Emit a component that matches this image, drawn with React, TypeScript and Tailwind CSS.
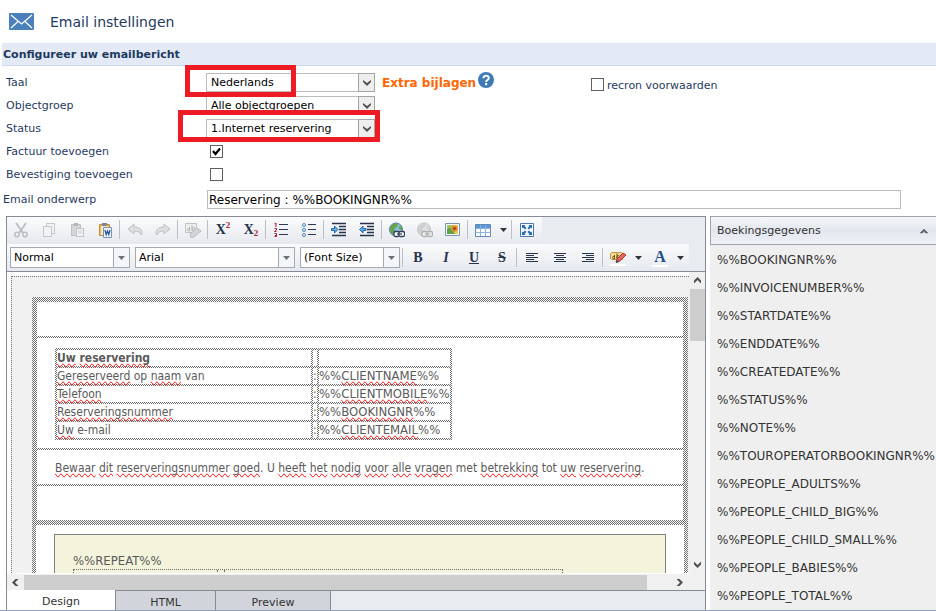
import type { ReactNode } from 'react';

const FIELDS = [
  'BOOKINGNR',
  'INVOICENUMBER',
  'STARTDATE',
  'ENDDATE',
  'CREATEDATE',
  'STATUS',
  'NOTE',
  'TOUROPERATORBOOKINGNR',
  'PEOPLE_ADULTS',
  'PEOPLE_CHILD_BIG',
  'PEOPLE_CHILD_SMALL',
  'PEOPLE_BABIES',
  'PEOPLE_TOTAL',
];

// one-pixel checkerboard used for the table guides in the editor
const CHECKER = 'bg-[repeating-conic-gradient(#6e6e6e_0_25%,#ffffff_0_50%)] bg-[length:2px_2px]';

export default function App() {
  return (
    <div className="overflow-hidden bg-white font-['DejaVu_Sans',Verdana,sans-serif] text-[11px] leading-4 text-[#1f3a5f]">
      <header className="flex h-[43px] items-center gap-4 pl-[9px]">
        <svg width="25" height="17" viewBox="0 0 25 17" aria-hidden="true">
          <rect width="25" height="17" rx="1" fill="#4a80bb" />
          <path d="M2 2l10.500 9L23 2M2 15l7-6.500M23 15l-7-6.500" fill="none" stroke="#fff" strokeWidth="1.200" />
        </svg>
        <h1 className="text-[14px]">Email instellingen</h1>
      </header>
      <h2 className="ml-0.5 h-[23px] border-b border-[#cddaee] bg-[#e3eaf5] pl-px text-[11px] leading-6 font-bold">
        Configureer uw emailbericht
      </h2>

      <SettingsForm />

      <div className="flex border-b border-[#8fa3bd] pl-1.5">
        <Editor />
        <FieldPanel />
      </div>
    </div>
  );
}

function SettingsForm() {
  return (
    <form className="relative pt-[5px]">
      <div className="flex">
        <div className="w-[376px] shrink-0">
          <FormRow id="taal" label="Taal">
            <Dropdown id="taal" value="Nederlands" />
          </FormRow>
          <FormRow id="objectgroep" label="Objectgroep">
            <Dropdown id="objectgroep" value="Alle objectgroepen" />
          </FormRow>
          <FormRow id="status" label="Status">
            <Dropdown id="status" value="1.Internet reservering" />
          </FormRow>
          <FormRow id="factuur" label="Factuur toevoegen">
            <Tick id="factuur" checked />
          </FormRow>
          <FormRow id="bevestiging" label="Bevestiging toevoegen">
            <Tick id="bevestiging" />
          </FormRow>
        </div>
        <div className="flex h-[18px] items-center gap-0.5 pl-1.5">
          <a href="#bijlagen" className="pt-1.5 text-[12px] font-bold text-[#ff6600]">
            Extra bijlagen
          </a>
          <button type="button" aria-label="Help" className="size-4">
            <svg width="16" height="16" viewBox="0 0 16 16">
              <circle cx="8" cy="8" r="8" fill="#3f7ab8" />
              <path d="M5.500 6.200C5.500 3 10.800 3 10.800 6c0 2-2.700 1.900-2.700 4" fill="none" stroke="#fff" strokeWidth="2" />
              <rect x="7" y="11" width="2.200" height="2.200" fill="#fff" />
            </svg>
          </button>
        </div>
        <div className="ml-auto flex h-[26px] w-[345px] items-center gap-[3px]">
          <Tick id="recron" plain />
          <label htmlFor="recron" className="pt-1">
            recron voorwaarden
          </label>
        </div>
      </div>
      <div className="flex h-[30px] items-center pr-[35px] pb-[3px] pl-[3px]">
        <label htmlFor="onderwerp" className="w-[204px] shrink-0">
          Email onderwerp
        </label>
        <input
          id="onderwerp"
          defaultValue="Reservering : %%BOOKINGNR%%"
          className="h-[19px] min-w-0 flex-1 border border-[#bcbcbc] px-px text-[12px] text-black"
        />
      </div>
      <div className="pointer-events-none absolute -top-px left-[185px] h-8 w-[111px] border-[5px] border-[#ed1c24]" />
      <div className="pointer-events-none absolute top-11 left-[178px] h-8 w-[202px] border-[5px] border-[#ed1c24]" />
    </form>
  );
}

function FormRow({ id, label, children }: { id: string; label: string; children: ReactNode }) {
  return (
    <div className="flex h-[23px] items-center pl-1.5">
      <label htmlFor={id} className="w-[200px] shrink-0">
        {label}
      </label>
      {children}
    </div>
  );
}

function Dropdown({ id, value }: { id: string; value: string }) {
  return (
    <div className="relative h-[19px] w-[169px]">
      <select id={id} className="h-[19px] w-full appearance-none border border-[#bcbcbc] bg-white pl-1 text-black">
        <option>{value}</option>
      </select>
      <span className="pointer-events-none absolute inset-y-0 right-0 flex w-[17px] items-center justify-center border border-[#a5a5a5] bg-[#eeeeee]">
        <svg width="8" height="6" viewBox="0 0 8 6">
          <path d="M0 0l4 3 4-3v2L4 6 0 2z" fill="#505050" />
        </svg>
      </span>
    </div>
  );
}

function Tick({ id, checked, plain }: { id: string; checked?: boolean; plain?: boolean }) {
  return (
    <span className={plain ? 'relative size-[13px]' : 'relative ml-1 size-[13px]'}>
      <input
        id={id}
        type="checkbox"
        defaultChecked={checked}
        className="peer block size-[13px] appearance-none border border-[#606060] bg-white"
      />
      <svg
        width="13"
        height="13"
        viewBox="0 0 13 13"
        className="pointer-events-none absolute inset-0 hidden peer-checked:block"
      >
        <path d="M3 6l2.500 3L10 3.500" fill="none" stroke="#000" strokeWidth="2.200" />
      </svg>
    </span>
  );
}

function Editor() {
  return (
    <section className="flex min-w-0 flex-1 flex-col border-x border-t border-[#858a94] bg-[#e8ebf0]">
      <Toolbar />
      <div className="flex h-[302px] bg-white">
        <Canvas />
        <div className="flex w-4 shrink-0 flex-col items-center bg-[#f0f0f0]">
          <Arrow className="my-1 rotate-180" />
          <div className="h-[52px] w-[15px] bg-[#cdcdcd]" />
          <Arrow className="mt-auto mb-[5px]" />
        </div>
      </div>
      <div className="flex h-4 items-center bg-[#f0f0f0]">
        <Arrow className="mx-1 rotate-90" />
        <div className="h-[15px] flex-1 bg-[#cdcdcd]" />
        <Arrow className="mr-[21px] ml-7 -rotate-90" />
      </div>
      <div className="flex h-5 text-center text-[#333333]" role="tablist">
        <button type="button" role="tab" aria-selected="true" className="w-[108px] bg-white pt-1">
          Design
        </button>
        <button type="button" role="tab" className="w-[100px] border-t border-l border-[#858a94] bg-[#d1d5db] pt-1">
          HTML
        </button>
        <button type="button" role="tab" className="w-[115px] border-t border-l border-[#858a94] bg-[#d1d5db] pt-1">
          Preview
        </button>
        <div className="flex-1 border-t border-l border-[#858a94]" />
      </div>
    </section>
  );
}

function Arrow({ className }: { className: string }) {
  return (
    <button type="button" aria-label="Scroll" className={`flex size-[9px] shrink-0 items-center justify-center ${className}`}>
      <svg width="9" height="9" viewBox="0 0 9 9">
        <path d="M1 1.500l3.500 3.500L8 1.500V4.500L4.500 8 1 4.500z" fill="#505050" />
      </svg>
    </button>
  );
}

/* ---------- toolbar ---------- */

function Toolbar() {
  return (
    <div className="border-b border-[#858a94]">
      <div className="flex h-[27px] w-[535px] items-center bg-linear-to-b from-[#fafbfc] to-[#e6e9ee] pb-0.5">
        <Tool label="Cut">
          <g fill="none" stroke="#bdbfc2" strokeWidth="1.500">
            <path d="M3 1l7 10M13 1L6 11" strokeWidth="2" />
            <circle cx="4" cy="12.500" r="2.200" />
            <circle cx="12" cy="12.500" r="2.200" />
          </g>
        </Tool>
        <Tool label="Copy">
          <g fill="#f2f3f4" stroke="#c4c6c9">
            <path d="M5.500 1.500h8v10h-8z" />
            <path d="M2.500 4.500h8v10h-8z" />
          </g>
        </Tool>
        <Tool label="Paste">
          <path d="M2.500 2.500h9v11h-9z" fill="#d4d6d8" stroke="#bdbfc2" />
          <path d="M5 1h4v3H5z" fill="#b4b6b9" />
          <path d="M7.500 6.500h7v8h-7z" fill="#f3f4f5" stroke="#c0c2c5" />
          <path d="M9 9h4M9 11h4" stroke="#c8cacc" />
        </Tool>
        <Tool label="Paste from Word">
          <path d="M2.500 2.500h10v11h-10z" fill="#efb65c" stroke="#c68a3a" />
          <path d="M4 4h7v9H4z" fill="#fbe7c3" />
          <path d="M5 1h5v3H5z" fill="#7e8795" />
          <path d="M6.500 5.500h8v10h-8z" fill="#f4f8fd" stroke="#7894bd" />
          <path d="M8 8l1.200 4.500L10.500 9l1.300 3.500L13 8" fill="none" stroke="#2a5aa0" strokeWidth="1.300" />
        </Tool>
        <Separator />
        <Tool label="Undo">
          <path d="M1 7l6-5v3c5 0 8 2 8 7l-1 1c-1-3-3-4-7-4v3z" fill="#dcdee0" stroke="#bfc1c4" />
        </Tool>
        <Tool label="Redo">
          <path d="M15 7L9 2v3C4 5 1 7 1 12l1 1c1-3 3-4 7-4v3z" fill="#dcdee0" stroke="#bfc1c4" />
        </Tool>
        <Separator />
        <Tool label="Remove format">
          <path d="M.5 1.500h11v9H.5z" fill="#eceded" stroke="#c0c2c5" />
          <path d="M4.500 5v4M5 7a1.300 1.300 0 10-.1 1.500M7 3v6M7 7a1.500 1.500 0 113 0 1.500 1.500 0 01-3 0" fill="none" stroke="#b0b2b5" />
          <path d="M5 12l7-6 4 3-7 6-3 .5z" fill="#d3d5d7" stroke="#b7b9bc" />
        </Tool>
        <Separator />
        <TextTool label="Superscript">
          X<sup className="-top-1.5 text-[9px] text-[#b01c2e]">2</sup>
        </TextTool>
        <TextTool label="Subscript">
          X<sub className="-bottom-0.5 text-[9px] text-[#b01c2e]">2</sub>
        </TextTool>
        <Separator />
        <Tool label="Ordered list">
          <path d="M6 2.500h9M6 7.500h9M6 12.500h9" stroke="#2b3950" />
          <path d="M1.500 2L3 1v4M1.500 6.500H3.500V8l-2 1.500h2M1.500 11.500h2v3h-2M2 13.500h1.500" fill="none" stroke="#b01c2e" />
        </Tool>
        <Tool label="Bullet list">
          <path d="M7 2.500h8M7 7.500h8M7 12.500h8" stroke="#2b3950" />
          <g fill="#e5f1fc" stroke="#4c87bf">
            <circle cx="3" cy="3" r="1.500" />
            <circle cx="3" cy="8" r="1.500" />
            <circle cx="3" cy="13" r="1.500" />
          </g>
        </Tool>
        <Separator />
        <Tool label="Indent">
          <path d="M1 1.500h14M8 4.500h7M8 7.500h7M8 10.500h7M1 13.500h14" stroke="#27344a" strokeWidth="1.400" />
          <path d="M.5 6.500h3V4L7 7.500 3.500 11V8.500h-3z" fill="#62b1e8" stroke="#2766a8" />
        </Tool>
        <Tool label="Outdent">
          <path d="M1 1.500h14M8 4.500h7M8 7.500h7M8 10.500h7M1 13.500h14" stroke="#27344a" strokeWidth="1.400" />
          <path d="M7 6.500H4V4L.5 7.500 4 11V8.500h3z" fill="#62b1e8" stroke="#2766a8" />
        </Tool>
        <Separator />
        <Tool label="Insert link">
          <circle cx="7" cy="7.500" r="6.500" fill="#8cbde2" stroke="#4d7ba8" />
          <path d="M2 4c2-3 5-3 7-2L8 5 5 7l2 3-2 3C2 12 0 8 2 4zM10 4l3 1v3l-3-1z" fill="#63a548" />
          <LinkGlyph fill="#fff" stroke="#35415a" />
        </Tool>
        <Tool label="Remove link">
          <circle cx="7" cy="7.500" r="6.500" fill="#e0e1e2" stroke="#bfc0c2" />
          <path d="M2 4c2-3 5-3 7-2L8 5 5 7l2 3-2 3C2 12 0 8 2 4zM10 4l3 1v3l-3-1z" fill="#cfd0d1" />
          <LinkGlyph fill="#eee" stroke="#b0b2b5" />
        </Tool>
        <Tool label="Insert image">
          <path d="M.5 1.500h14v12H.5z" fill="#fff" stroke="#7b93ba" />
          <path d="M2 3h11v9H2z" fill="#e9cf57" />
          <path d="M2 7l3-2 3 4 2 3H2z" fill="#5fa343" />
          <path d="M2 3h4v3H2z" fill="#9ac26b" />
          <path d="M7 3l2 1 2-1 1 2 1 1-1 3-3 1-2-2-1-3z" fill="#e08a2f" />
          <circle cx="9.500" cy="6.500" r="1.300" fill="#8c3a1a" />
        </Tool>
        <Separator />
        <Tool label="Insert table">
          <path d="M.5 2.500h15v12H.5z" fill="#fff" stroke="#5f86bd" />
          <path d="M1 3h14v3.500H1z" fill="#5c96d6" />
          <path d="M.5 6.500h15M.5 10.500h15M5.500 3v11M10.500 3v11" stroke="#8fb2dd" />
        </Tool>
        <Caret />
        <Separator />
        <Tool label="Fullscreen">
          <path d="M1.500 1.500h13v13h-13z" fill="#f3f8fd" stroke="#4878b8" />
          <path
            d="M3 3h3.500L5.500 4l2 2L6 7.500l-2-2-1 1zM13 3H9.500l1 1-2 2L10 7.500l2-2 1 1zM3 13h3.500l-1-1 2-2L6 8.500l-2 2-1-1zM13 13H9.500l1-1-2-2L10 8.500l2 2 1-1z"
            fill="#2a68b0"
          />
        </Tool>
      </div>
      <div className="flex h-[27px] w-[682px] max-w-full items-center bg-linear-to-b from-[#fafbfc] to-[#e6e9ee]">
        <div className="mr-0.5 ml-[3px] flex gap-[5px]">
          <div className="w-[120px]">
            <ToolSelect label="Paragraph style" value="Normal" />
          </div>
          <div className="w-40">
            <ToolSelect label="Font" value="Arial" />
          </div>
          <div className="w-[100px]">
            <ToolSelect label="Font size" value="(Font Size)" />
          </div>
        </div>
        <Separator />
        <TextTool label="Bold">B</TextTool>
        <TextTool label="Italic">
          <i>I</i>
        </TextTool>
        <TextTool label="Underline">
          <u>U</u>
        </TextTool>
        <TextTool label="Strikethrough">
          <s>S</s>
        </TextTool>
        <Separator />
        <Tool label="Align left">
          <path d="M2 3.500h12M2 5.500h8M2 7.500h12M2 9.500h8M2 11.500h12" stroke="#27344a" />
        </Tool>
        <Tool label="Align center">
          <path d="M2 3.500h12M4 5.500h8M2 7.500h12M4 9.500h8M2 11.500h12" stroke="#27344a" />
        </Tool>
        <Tool label="Align right">
          <path d="M2 3.500h12M6 5.500h8M2 7.500h12M6 9.500h8M2 11.500h12" stroke="#27344a" />
        </Tool>
        <Separator />
        <Tool label="Highlight colour">
          <path d="M0 14h16v2H0z" fill="#fff" />
          <path d="M1.500 2.500h10l1 1v6h-11l-1-1v-5z" fill="#f6dc8c" stroke="#c79b45" />
          <path d="M4.500 5v4M5 7a1.300 1.300 0 10-.1 1.500M7 3.500V9M7 7a1.400 1.400 0 112.800 0A1.400 1.400 0 017 7" fill="none" stroke="#6b4a1a" />
          <path d="M6 12l1-3 6-6 3 2-6 6z" fill="#e2685c" stroke="#a93a35" />
          <path d="M6 13l1-3 2 2z" fill="#3c3c3c" />
        </Tool>
        <Caret />
        <button type="button" aria-label="Font colour" className="flex h-5 w-7 flex-col items-center">
          <span className="h-[17px] font-['Liberation_Serif',serif] text-[16px] leading-[17px] font-bold text-[#1f4e8c]">A</span>
          <span className="h-0.5 w-4 bg-white" />
        </button>
        <Caret />
      </div>
    </div>
  );
}

function Tool({ label, children }: { label: string; children: ReactNode }) {
  return (
    <button type="button" aria-label={label} className="flex h-6 w-7 shrink-0 items-center justify-center">
      <svg width="16" height="16" viewBox="0 0 16 16">
        {children}
      </svg>
    </button>
  );
}

function TextTool({ label, children }: { label: string; children: ReactNode }) {
  return (
    <button
      type="button"
      aria-label={label}
      className="h-6 w-7 shrink-0 font-['Liberation_Serif',serif] text-[14px] leading-6 font-bold text-[#27344a]"
    >
      {children}
    </button>
  );
}

function LinkGlyph({ fill, stroke }: { fill: string; stroke: string }) {
  return (
    <g fill={fill} stroke={stroke} strokeWidth="1.300">
      <rect x="5" y="9.500" width="5.500" height="5" rx="1.500" />
      <rect x="10" y="9.500" width="5.500" height="5" rx="1.500" />
      <path d="M8 12h5" />
    </g>
  );
}

function Separator() {
  return <span className="mr-px h-[19px] w-px shrink-0 bg-[#bcbfc6]" />;
}

function Caret() {
  return (
    <button type="button" aria-label="More" className="flex h-6 w-3.5 shrink-0 items-center pl-[3px]">
      <svg width="7" height="4" viewBox="0 0 7 4">
        <path d="M0 0h7L3.500 4z" fill="#303338" />
      </svg>
    </button>
  );
}

function ToolSelect({ label, value }: { label: string; value: string }) {
  return (
    <div className="relative h-[21px]">
      <select aria-label={label} className="block h-[21px] w-full appearance-none border border-[#a4a9b2] bg-white pl-[3px] text-black">
        <option>{value}</option>
      </select>
      <span className="pointer-events-none absolute inset-y-0 right-0 flex w-[17px] items-center justify-center border border-[#a4a9b2] bg-[#f4f5f8]">
        <svg width="7" height="4" viewBox="0 0 7 4">
          <path d="M0 0h7L3.500 4z" fill="#6b7078" />
        </svg>
      </span>
    </div>
  );
}

/* ---------- message body ---------- */

function Canvas() {
  const rows: [ReactNode, string][] = [
    [<><Misspelt>Gereserveerd</Misspelt> op <Misspelt>naam</Misspelt> van</>, 'CLIENTNAME'],
    [<Misspelt>Telefoon</Misspelt>, 'CLIENTMOBILE'],
    [<Misspelt>Reserveringsnummer</Misspelt>, 'BOOKINGNR'],
    [<><Misspelt>Uw</Misspelt> e-mail</>, 'CLIENTEMAIL'],
  ];
  return (
    <div className="min-w-0 flex-1 overflow-hidden pt-1 pb-px pl-1 font-['DejaVu_Sans_Condensed','DejaVu_Sans',sans-serif] text-[12px] text-[#5a5a5a]">
      <div className="h-full overflow-hidden border-t border-l border-dotted border-[#707070] bg-[#f1f1f1] pt-5 pr-px pl-5">
        <div className={`grid gap-0.5 p-[5px] ${CHECKER}`}>
          <div className="h-[34px] bg-white" />
          <div className="h-[110px] bg-white pt-2.5 pl-[18px]">
            <table className={`border-separate border-spacing-[2px] leading-4 ${CHECKER}`}>
              <tbody>
                <tr>
                  <th className="h-4 w-[254px] bg-white p-0 text-left font-bold">
                    <Misspelt>Uw</Misspelt> <Misspelt>reservering</Misspelt>
                  </th>
                  <td className="w-1 bg-white p-0" />
                  <td className="w-[130px] bg-white p-0" />
                </tr>
                {rows.map(([label, field]) => (
                  <tr key={field}>
                    <td className="h-4 bg-white p-0">{label}</td>
                    <td className="bg-white p-0">:</td>
                    <td className="bg-white p-0 text-[13px] leading-4">
                      %%<Misspelt>{field}</Misspelt>%%
                    </td>
                  </tr>
                ))}
              </tbody>
            </table>
          </div>
          <p className="h-[34px] overflow-hidden bg-white pt-2.5 pl-[18px] whitespace-nowrap">
            <Misspelt>Bewaar</Misspelt> <Misspelt>dit</Misspelt> <Misspelt>reserveringsnummer</Misspelt> <Misspelt>goed</Misspelt>. U{' '}
            <Misspelt>heeft</Misspelt> <Misspelt>het</Misspelt> <Misspelt>nodig</Misspelt> <Misspelt>voor</Misspelt> <Misspelt>alle</Misspelt>{' '}
            <Misspelt>vragen</Misspelt> met <Misspelt>betrekking</Misspelt> tot <Misspelt>uw</Misspelt> <Misspelt>reservering</Misspelt>.
          </p>
          <div className="h-[34px] bg-white" />
        </div>
        <div className={`px-1 ${CHECKER}`}>
          <div className="bg-white pt-[9px] pr-[18px] pl-[18px]">
            <div className="h-20 border border-[#808080] bg-[#f4f4dc] pt-[18px] pl-[18px] text-[13px] leading-4">
              %%REPEAT%%
              <div className="flex h-10 w-[490px] border border-dotted border-[#707070]">
                <div className="w-36 border-r border-dotted border-[#707070]" />
                <div className="w-[7px] border-r border-dotted border-[#707070]" />
              </div>
            </div>
          </div>
        </div>
      </div>
    </div>
  );
}

function Misspelt({ children }: { children: ReactNode }) {
  return <span className="[text-decoration-color:#ff0000] [text-decoration-line:spelling-error]">{children}</span>;
}

/* ---------- merge fields ---------- */

function FieldPanel() {
  return (
    <aside className="ml-1 w-[226px] shrink-0 bg-[#efefef] text-[#333333]">
      <button
        type="button"
        className="flex h-[29px] w-full items-center justify-between border-y border-l border-[#a0a4aa] bg-linear-to-b from-[#f4f6f9] via-[#e3e7ed] to-[#eef2f8] pr-2 pl-1.5"
      >
        Boekingsgegevens
        <svg width="8" height="6" viewBox="0 0 8 6">
          <path d="M0 5l4-4 4 4H5.500L4 3.500 2.500 5z" fill="#606772" stroke="#606772" strokeWidth=".5" />
        </svg>
      </button>
      <ul className="pt-px pl-[7px] text-[12px]">
        {FIELDS.map((field) => (
          <li key={field} className="flex h-7 items-center whitespace-nowrap">
            %%{field}%%
          </li>
        ))}
      </ul>
    </aside>
  );
}
